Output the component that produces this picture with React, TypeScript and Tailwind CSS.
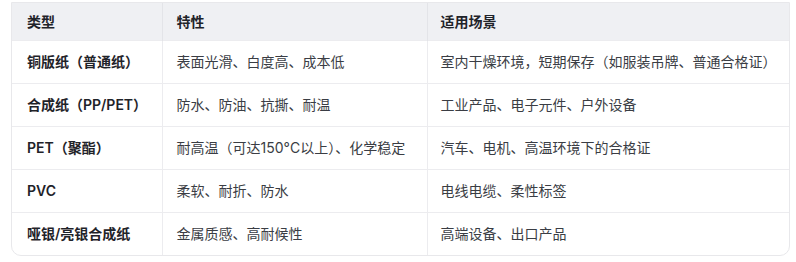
import React from 'react';

const rows = [
  { type: '铜版纸（普通纸）', feature: '表面光滑、白度高、成本低', usage: '室内干燥环境，短期保存（如服装吊牌、普通合格证）' },
  { type: '合成纸（PP/PET）', feature: '防水、防油、抗撕、耐温', usage: '工业产品、电子元件、户外设备' },
  { type: 'PET（聚酯）', feature: '耐高温（可达150°C以上）、化学稳定', usage: '汽车、电机、高温环境下的合格证' },
  { type: 'PVC', feature: '柔软、耐折、防水', usage: '电线电缆、柔性标签' },
  { type: '哑银/亮银合成纸', feature: '金属质感、高耐候性', usage: '高端设备、出口产品' },
];

const App: React.FC = () => {
  return (
    <div className="w-[796px] h-[262px] bg-white pl-[11px] pr-[6px] pt-[2px] font-['Inter','Noto_Sans_CJK_SC',sans-serif] text-[14px]">
      <div className="border border-[#e8e8eb] rounded-b-[10px] overflow-hidden">
        <table className="w-full border-collapse table-fixed">
          <colgroup>
            <col className="w-[150px]" />
            <col className="w-[265px]" />
            <col />
          </colgroup>
          <thead>
            <tr className="bg-[#eff0f3] h-[37px]">
              <th className="text-left font-semibold text-[#1f2329] px-[15px] border-r border-[#e3e4e8]">类型</th>
              <th className="text-left font-semibold text-[#1f2329] px-[14px] border-r border-[#e3e4e8]">特性</th>
              <th className="text-left font-semibold text-[#1f2329] px-[13px]">适用场景</th>
            </tr>
          </thead>
          <tbody>
            {rows.map((r, i) => (
              <tr key={i} className="h-[43px] border-t border-[#ececef]">
                <td className="px-[15px] font-semibold text-[#1f2329] border-r border-[#ececef] whitespace-nowrap">{r.type}</td>
                <td className="px-[14px] text-[#3a3d44] border-r border-[#ececef] whitespace-nowrap">{r.feature}</td>
                <td className="px-[13px] text-[#3a3d44] whitespace-nowrap">{r.usage}</td>
              </tr>
            ))}
          </tbody>
        </table>
      </div>
    </div>
  );
};

export default App;
